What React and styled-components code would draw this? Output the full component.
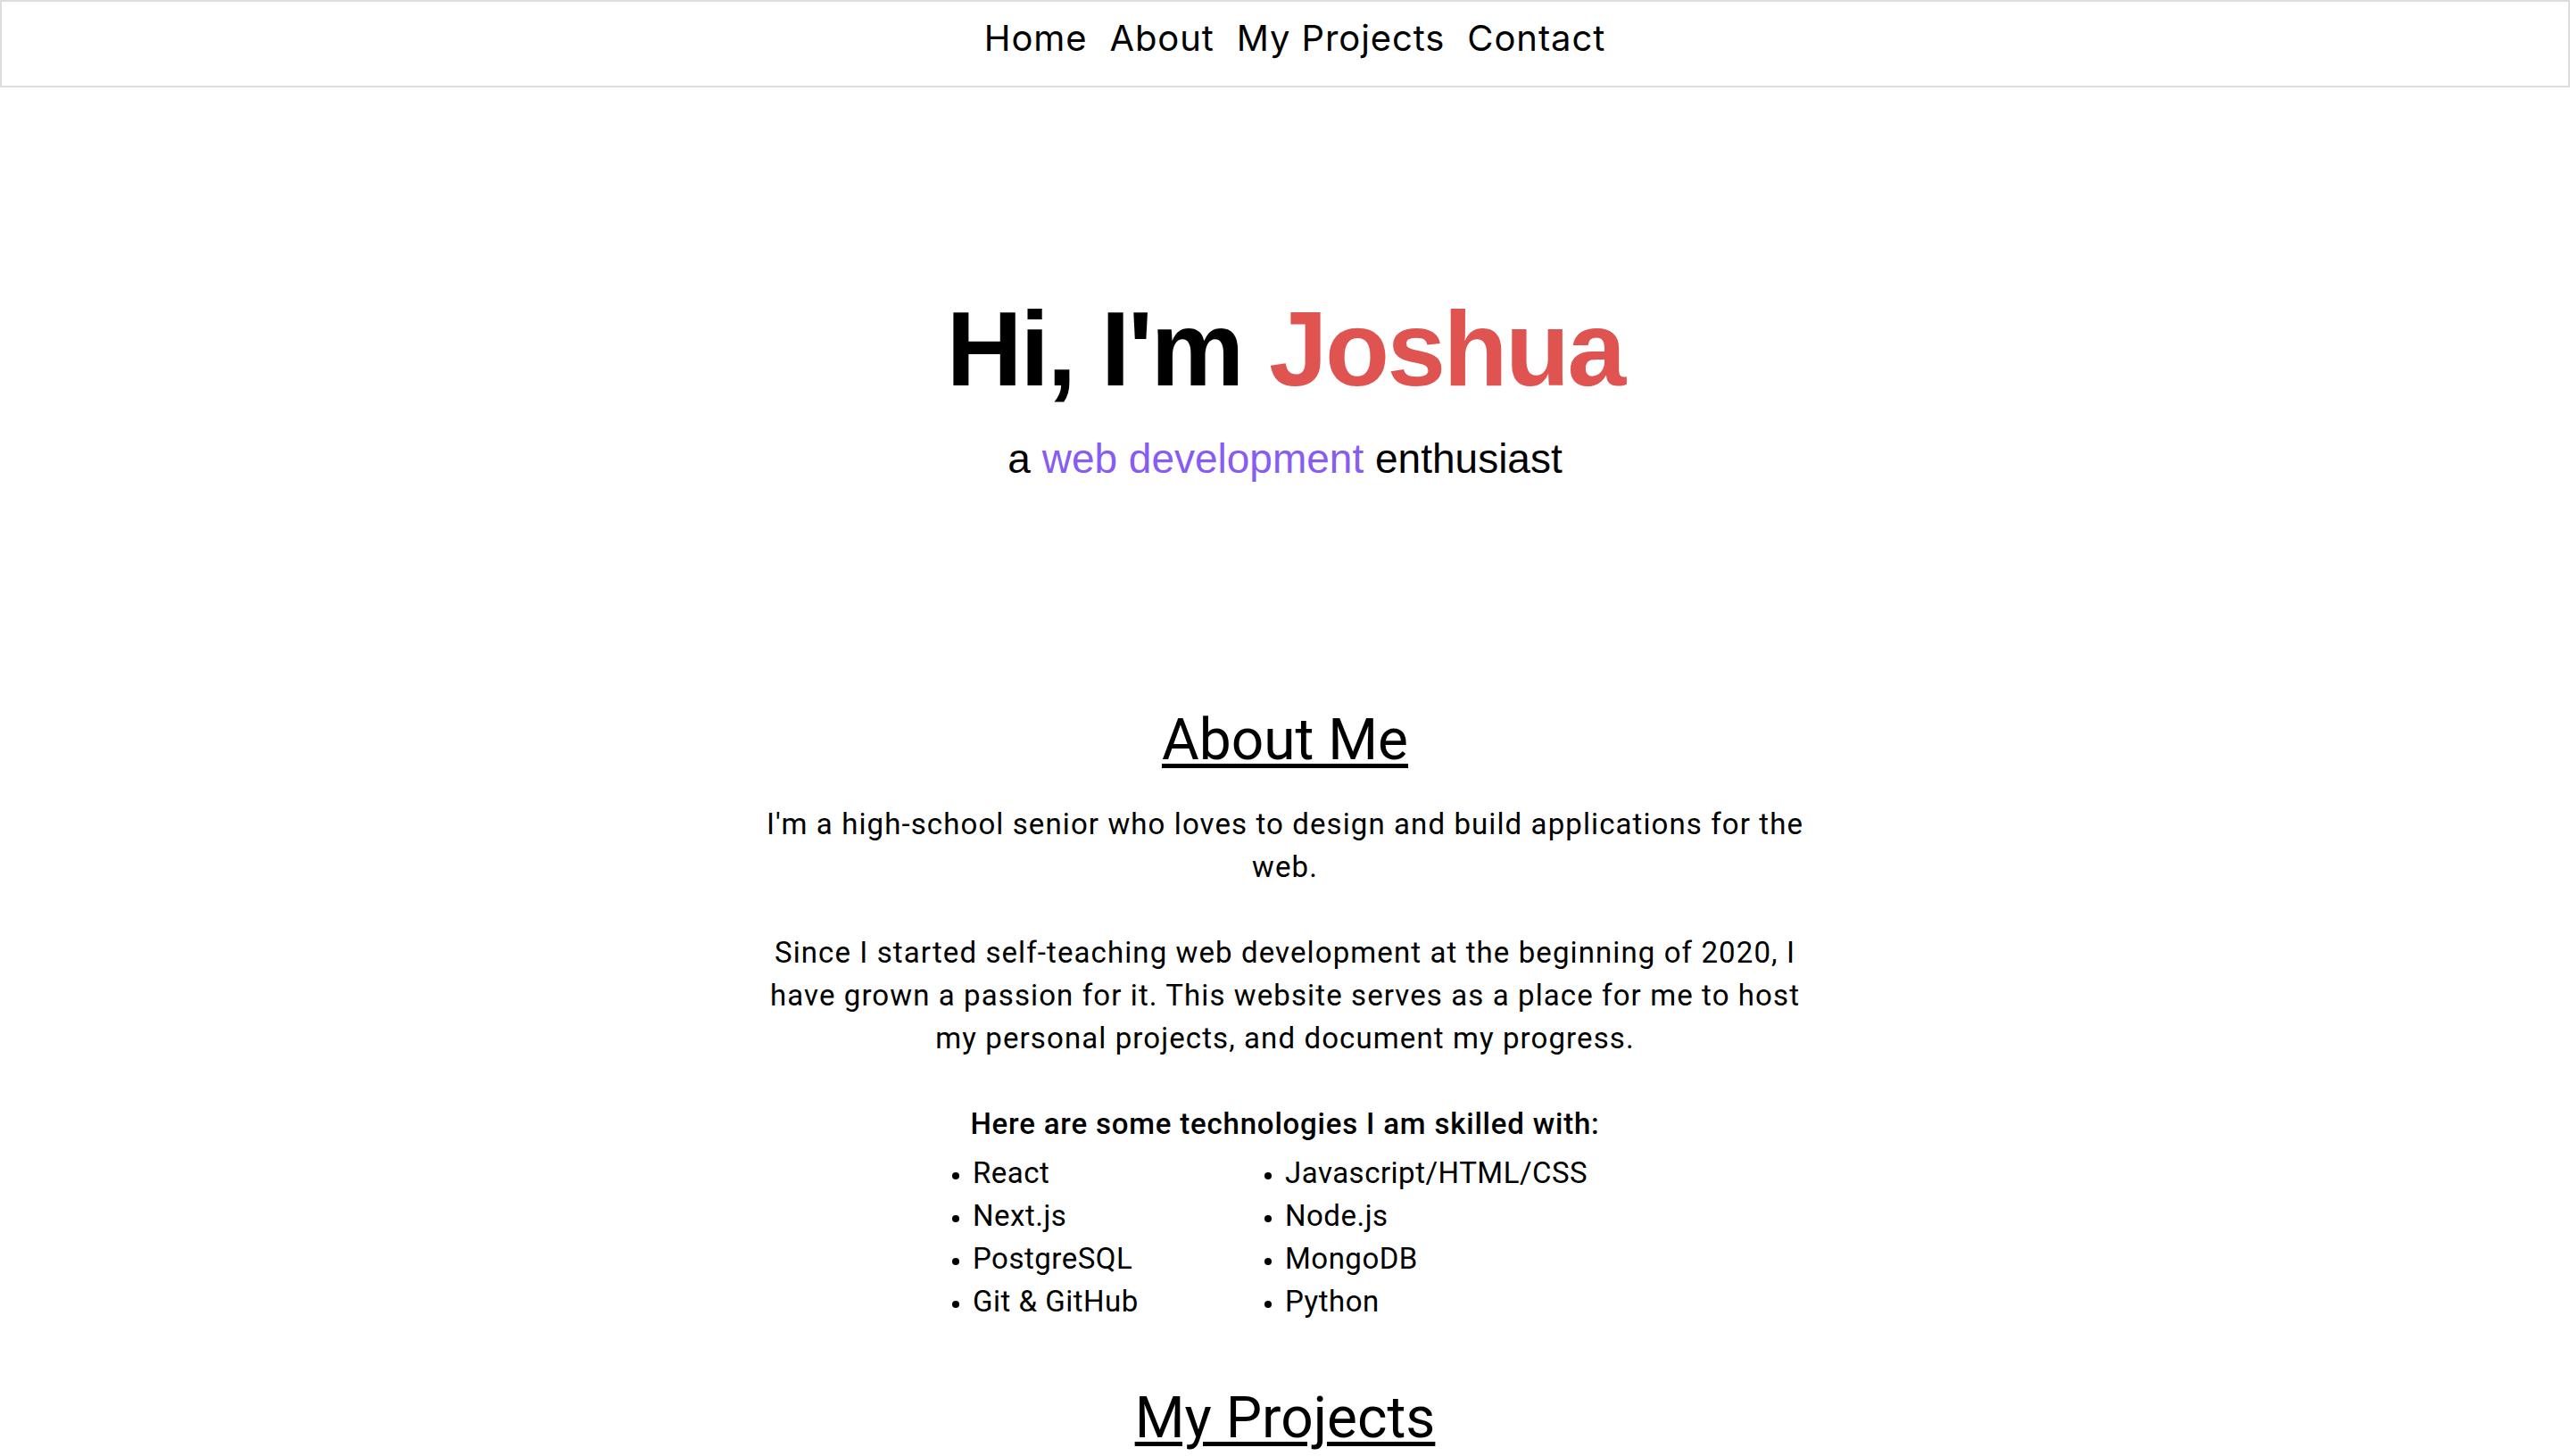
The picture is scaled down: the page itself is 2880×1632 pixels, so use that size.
import styled, { createGlobalStyle } from "styled-components";

const GlobalStyle = createGlobalStyle`
  body {
    margin: 0;
    background: #ffffff;
    color: #000000;
    font-family: Roboto, "Liberation Sans", sans-serif;
  }
  * {
    box-sizing: border-box;
  }
`;

const Nav = styled.nav`
  height: 98px;
  border: 2px solid #dcdce1;
  display: flex;
  justify-content: center;
  align-items: flex-start;
  gap: 25px;
  padding: 21px 0 0 22px;
`;

const NavLink = styled.a`
  font-family: Inter, "Open Sans", sans-serif;
  font-size: 40px;
  line-height: 1;
  letter-spacing: 0.9px;
  color: #000;
  text-decoration: none;
  cursor: pointer;
`;

const Hero = styled.header`
  padding-top: 234px;
  text-align: center;
`;

const Title = styled.h1`
  margin: 0;
  font-family: "Liberation Sans", Arial, sans-serif;
  font-weight: 700;
  font-size: 118px;
  line-height: 1;
  letter-spacing: -2.6px;
`;

const Accent = styled.span`
  color: ${(p) => p.$color};
`;

const Tagline = styled.p`
  margin: 41px 0 0;
  font-family: "Liberation Sans", Arial, sans-serif;
  font-size: 46px;
  line-height: 1;
`;

const Section = styled.section`
  max-width: 1180px;
  margin: 0 auto;
  text-align: center;
  padding-top: ${(p) => p.$top}px;
`;

const SectionTitle = styled.h2`
  margin: 0 0 38px;
  font-size: 64px;
  font-weight: 400;
  line-height: 1;
  text-decoration: underline;
  text-decoration-thickness: 5px;
  text-underline-offset: 5px;
`;

const Text = styled.p`
  margin: 0 0 ${(p) => p.$gap ?? 48}px;
  font-size: 33px;
  line-height: 48px;
  letter-spacing: ${(p) => (p.$strong ? 0.8 : 1.1)}px;
  font-weight: ${(p) => (p.$strong ? 500 : 400)};
`;

const SkillColumns = styled.div`
  display: flex;
  justify-content: center;
`;

const SkillList = styled.ul`
  width: 350px;
  margin: 0;
  padding: 0;
  text-align: left;
  list-style: disc outside;
`;

const Skill = styled.li`
  font-size: 33px;
  line-height: 48px;
  letter-spacing: 0.5px;
  &::marker {
    font-size: 26px;
  }
`;

const left = ["React", "Next.js", "PostgreSQL", "Git & GitHub"];
const right = ["Javascript/HTML/CSS", "Node.js", "MongoDB", "Python"];

export default function App() {
  return (
    <>
      <GlobalStyle />
      <Nav>
        <NavLink>Home</NavLink>
        <NavLink>About</NavLink>
        <NavLink>My Projects</NavLink>
        <NavLink>Contact</NavLink>
      </Nav>

      <Hero>
        <Title>
          Hi, I'm <Accent $color="#df5450">Joshua</Accent>
        </Title>
        <Tagline>
          a <Accent $color="#875cf2">web development</Accent> enthusiast
        </Tagline>
      </Hero>

      <Section $top={261}>
        <SectionTitle>About Me</SectionTitle>
        <Text>
          I'm a high-school senior who loves to design and build applications
          for the web.
        </Text>
        <Text>
          Since I started self-teaching web development at the beginning of
          2020, I have grown a passion for it. This website serves as a place
          for me to host my personal projects, and document my progress.
        </Text>
        <Text $strong $gap={7}>
          Here are some technologies I am skilled with:
        </Text>
        <SkillColumns>
          <SkillList>
            {left.map((s) => (
              <Skill key={s}>{s}</Skill>
            ))}
          </SkillList>
          <SkillList>
            {right.map((s) => (
              <Skill key={s}>{s}</Skill>
            ))}
          </SkillList>
        </SkillColumns>
      </Section>

      <Section $top={75}>
        <SectionTitle>My Projects</SectionTitle>
      </Section>
    </>
  );
}
